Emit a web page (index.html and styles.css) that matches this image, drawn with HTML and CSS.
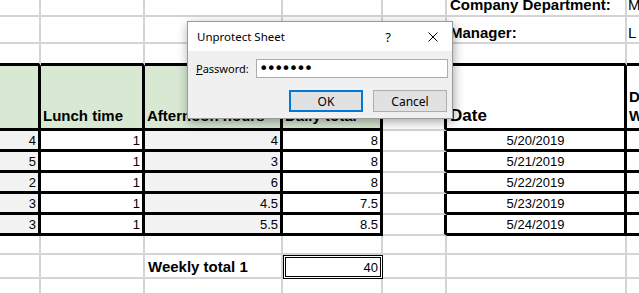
FILE: index.html
```html
<!DOCTYPE html>
<html lang="en">
<head>
    <meta charset="UTF-8">
    <meta name="viewport" content="width=device-width, initial-scale=1.0">
    <title>Timesheet</title>
    <link rel="stylesheet" href="styles.css">
</head>
<body>
    <div class="sheet">
        <!-- row 1 -->
        <div class="c"></div>
        <div class="c"></div>
        <div class="c"></div>
        <div class="c"></div>
        <div class="c"></div>
        <div class="c label top-cut">Company Department:</div>
        <div class="c plain top-cut">M</div>

        <!-- row 2 -->
        <div class="c"></div>
        <div class="c"></div>
        <div class="c"></div>
        <div class="c"></div>
        <div class="c"></div>
        <div class="c label low">Manager:</div>
        <div class="c plain low">L</div>

        <!-- row 3 -->
        <div class="c bb"></div>
        <div class="c bb"></div>
        <div class="c bb"></div>
        <div class="c bb"></div>
        <div class="c"></div>
        <div class="c bb"></div>
        <div class="c bb"></div>

        <!-- header -->
        <div class="c bb br head"></div>
        <div class="c bb br head">Lunch time</div>
        <div class="c bb br head">Afternoon hours</div>
        <div class="c bb br head">Daily total</div>
        <div class="c br"></div>
        <div class="c bb br head white date-head">Date</div>
        <div class="c bb br head white">Day of<br>Week</div>

        <!-- data -->
        <div class="c bb br num shade">4</div>
        <div class="c bb br num">1</div>
        <div class="c bb br num shade">4</div>
        <div class="c bb br num">8</div>
        <div class="c br"></div>
        <div class="c bb br date">5/20/2019</div>
        <div class="c bb br"></div>

        <div class="c bb br num shade">5</div>
        <div class="c bb br num">1</div>
        <div class="c bb br num shade">3</div>
        <div class="c bb br num">8</div>
        <div class="c br"></div>
        <div class="c bb br date">5/21/2019</div>
        <div class="c bb br"></div>

        <div class="c bb br num shade">2</div>
        <div class="c bb br num">1</div>
        <div class="c bb br num shade">6</div>
        <div class="c bb br num">8</div>
        <div class="c br"></div>
        <div class="c bb br date">5/22/2019</div>
        <div class="c bb br"></div>

        <div class="c bb br num shade">3</div>
        <div class="c bb br num">1</div>
        <div class="c bb br num shade">4.5</div>
        <div class="c bb br num">7.5</div>
        <div class="c br"></div>
        <div class="c bb br date">5/23/2019</div>
        <div class="c bb br"></div>

        <div class="c bb br num shade">3</div>
        <div class="c bb br num">1</div>
        <div class="c bb br num shade">5.5</div>
        <div class="c bb br num">8.5</div>
        <div class="c br"></div>
        <div class="c bb br date">5/24/2019</div>
        <div class="c bb br"></div>

        <!-- blank -->
        <div class="c"></div>
        <div class="c"></div>
        <div class="c"></div>
        <div class="c"></div>
        <div class="c"></div>
        <div class="c"></div>
        <div class="c"></div>

        <!-- weekly total -->
        <div class="c"></div>
        <div class="c"></div>
        <div class="c label">Weekly total 1</div>
        <div class="c num total">40</div>
        <div class="c"></div>
        <div class="c"></div>
        <div class="c"></div>

        <!-- blank -->
        <div class="c"></div>
        <div class="c"></div>
        <div class="c"></div>
        <div class="c"></div>
        <div class="c"></div>
        <div class="c"></div>
        <div class="c"></div>
    </div>

    <div class="dialog">
        <div class="dialog-title">
            <span class="dialog-name">Unprotect Sheet</span>
            <span class="help">?</span>
            <span class="close">
                <svg width="10" height="10" viewBox="0 0 10 10">
                    <path d="M0.5 0.5 L9.5 9.5 M9.5 0.5 L0.5 9.5" stroke="#000" stroke-width="1" fill="none"/>
                </svg>
            </span>
        </div>
        <div class="dialog-body">
            <div class="field">
                <label for="pw"><u>P</u>assword:</label>
                <input type="password" id="pw" value="1234567">
            </div>
            <div class="buttons">
                <button type="button" class="btn primary">OK</button>
                <button type="button" class="btn">Cancel</button>
            </div>
        </div>
    </div>
</body>
</html>
```

FILE: styles.css
```css
body {
  margin: 0;
  background: #fff;
  font-family: "Liberation Sans", Arial, sans-serif;
  color: #000;
  position: relative;
  overflow: hidden;
}

.sheet {
  display: grid;
  grid-template-columns: 41px 104px 138px 100px 64px 180px 100px;
  grid-template-rows: 17px 27px 22px 65px repeat(5, 21px) 19px 24px 24px;
}

.c {
  box-sizing: border-box;
  border-right: 2px solid #d4d4d4;
  border-bottom: 2px solid #d4d4d4;
  overflow: hidden;
  display: flex;
  white-space: nowrap;
  font-size: 13px;
}

.bb {
  border-bottom: 3px solid #000;
}
.br {
  border-right: 3px solid #000;
}

.label {
  font-weight: bold;
  font-size: 15px;
  align-items: center;
  padding-left: 3px;
}
.plain {
  font-size: 15px;
  align-items: center;
  padding-left: 1px;
}
.top-cut {
  align-items: flex-end;
  line-height: 14px;
  padding-bottom: 3px;
}
.low {
  align-items: flex-end;
  line-height: 15px;
  padding-bottom: 2px;
}

.head {
  background: #d8e8d3;
  font-weight: bold;
  font-size: 15px;
  align-items: flex-end;
  padding: 0 0 3px 2px;
  line-height: 19px;
}
.white {
  background: #fff;
}
.date-head {
  font-size: 17px;
  padding-left: 3px;
}

.num {
  justify-content: flex-end;
  align-items: center;
  padding-right: 2px;
}
.shade {
  background: #f2f2f2;
}
.date {
  justify-content: center;
  align-items: center;
}

.total {
  border: 3px double #000;
}

/* dialog */
.dialog {
  position: absolute;
  left: 187px;
  top: 21px;
  width: 266px;
  height: 98px;
  box-sizing: border-box;
  border: 1px solid #9a9a9a;
  background: #f0f0f0;
  box-shadow: 1px 3px 10px rgba(0, 0, 0, 0.35);
  font-family: "Noto Sans", "Open Sans", sans-serif;
  font-size: 11px;
  display: flex;
  flex-direction: column;
}

.dialog-title {
  height: 29px;
  background: #fff;
  display: flex;
  align-items: center;
  padding-left: 9px;
  font-size: 11.5px;
}
.dialog-name {
  flex: 1;
}
.help {
  font-size: 13px;
  margin-right: 37px;
}
.close {
  display: flex;
  margin-right: 14px;
}

.dialog-body {
  padding: 8px 4px 0 8px;
}
.field {
  display: flex;
  align-items: center;
  justify-content: space-between;
}
.field input {
  width: 192px;
  height: 19px;
  box-sizing: border-box;
  border: 1px solid #adadad;
  background: #fff;
  padding: 0 2px;
  font-family: "DejaVu Sans", sans-serif;
  font-size: 16px;
  letter-spacing: -2px;
  margin: 0;
  outline: none;
}

.buttons {
  display: flex;
  justify-content: flex-end;
  gap: 10px;
  margin-top: 12px;
  padding-right: 1px;
}
.btn {
  width: 74px;
  height: 22px;
  box-sizing: border-box;
  background: #e1e1e1;
  border: 1px solid #adadad;
  font-family: "Noto Sans", "Open Sans", sans-serif;
  font-size: 12px;
  color: #000;
  padding: 0;
  margin: 0;
}
.btn.primary {
  border: 2px solid #0078d7;
}
```
